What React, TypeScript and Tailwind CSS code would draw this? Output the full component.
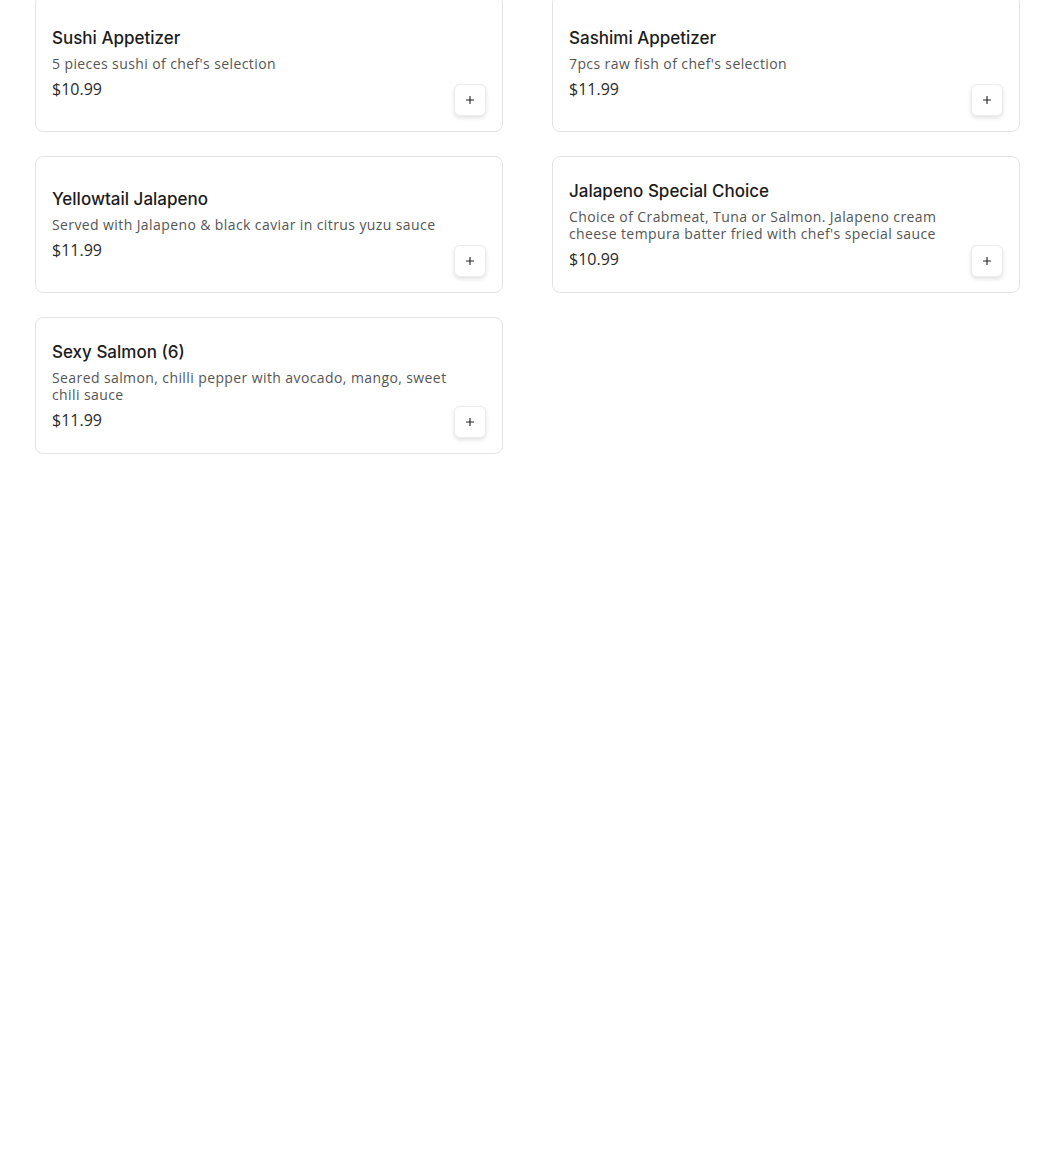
import { Plus } from "lucide-react";

const items = [
  { name: "Sushi Appetizer", desc: "5 pieces sushi of chef's selection", price: "$10.99" },
  { name: "Sashimi Appetizer", desc: "7pcs raw fish of chef's selection", price: "$11.99" },
  { name: "Yellowtail Jalapeno", desc: "Served with Jalapeno & black caviar in citrus yuzu sauce", price: "$11.99" },
  {
    name: "Jalapeno Special Choice",
    desc: "Choice of Crabmeat, Tuna or Salmon. Jalapeno cream cheese tempura batter fried with chef's special sauce",
    price: "$10.99",
  },
  { name: "Sexy Salmon (6)", desc: "Seared salmon, chilli pepper with avocado, mango, sweet chili sauce", price: "$11.99" },
];

function ItemCard({ name, desc, price }: { name: string; desc: string; price: string }) {
  return (
    <div className="flex h-[137px] rounded-lg border border-[#e3e3e3] bg-white pl-4 pr-4">
      <div className="flex w-[402px] flex-col justify-center">
        <h3 className="font-['Inter',sans-serif] text-[17px] font-medium leading-[20px] text-[#1c1c1c]">{name}</h3>
        <p className="mt-[7px] text-[14px] leading-[17px] tracking-[0.4px] text-[#555]">{desc}</p>
        <span className="mt-[7px] text-[16px] leading-[20px] text-[#2a2a2a]">{price}</span>
      </div>
      <div className="flex flex-1 items-end justify-end pb-[15px]">
        <button className="flex h-8 w-8 items-center justify-center rounded-md border border-[#ececec] bg-white shadow-[0_2px_4px_rgba(0,0,0,0.12)]">
          <Plus className="h-3 w-3 text-[#222]" strokeWidth={2.25} />
        </button>
      </div>
    </div>
  );
}

export default function App() {
  return (
    <div className="min-h-[1152px] bg-white font-['Open_Sans',sans-serif]">
      <div className="-mt-[5px] grid w-[1020px] grid-cols-2 gap-x-[49px] gap-y-[24px] pl-[35px]">
        {items.map((item) => (
          <ItemCard key={item.name} {...item} />
        ))}
      </div>
    </div>
  );
}
